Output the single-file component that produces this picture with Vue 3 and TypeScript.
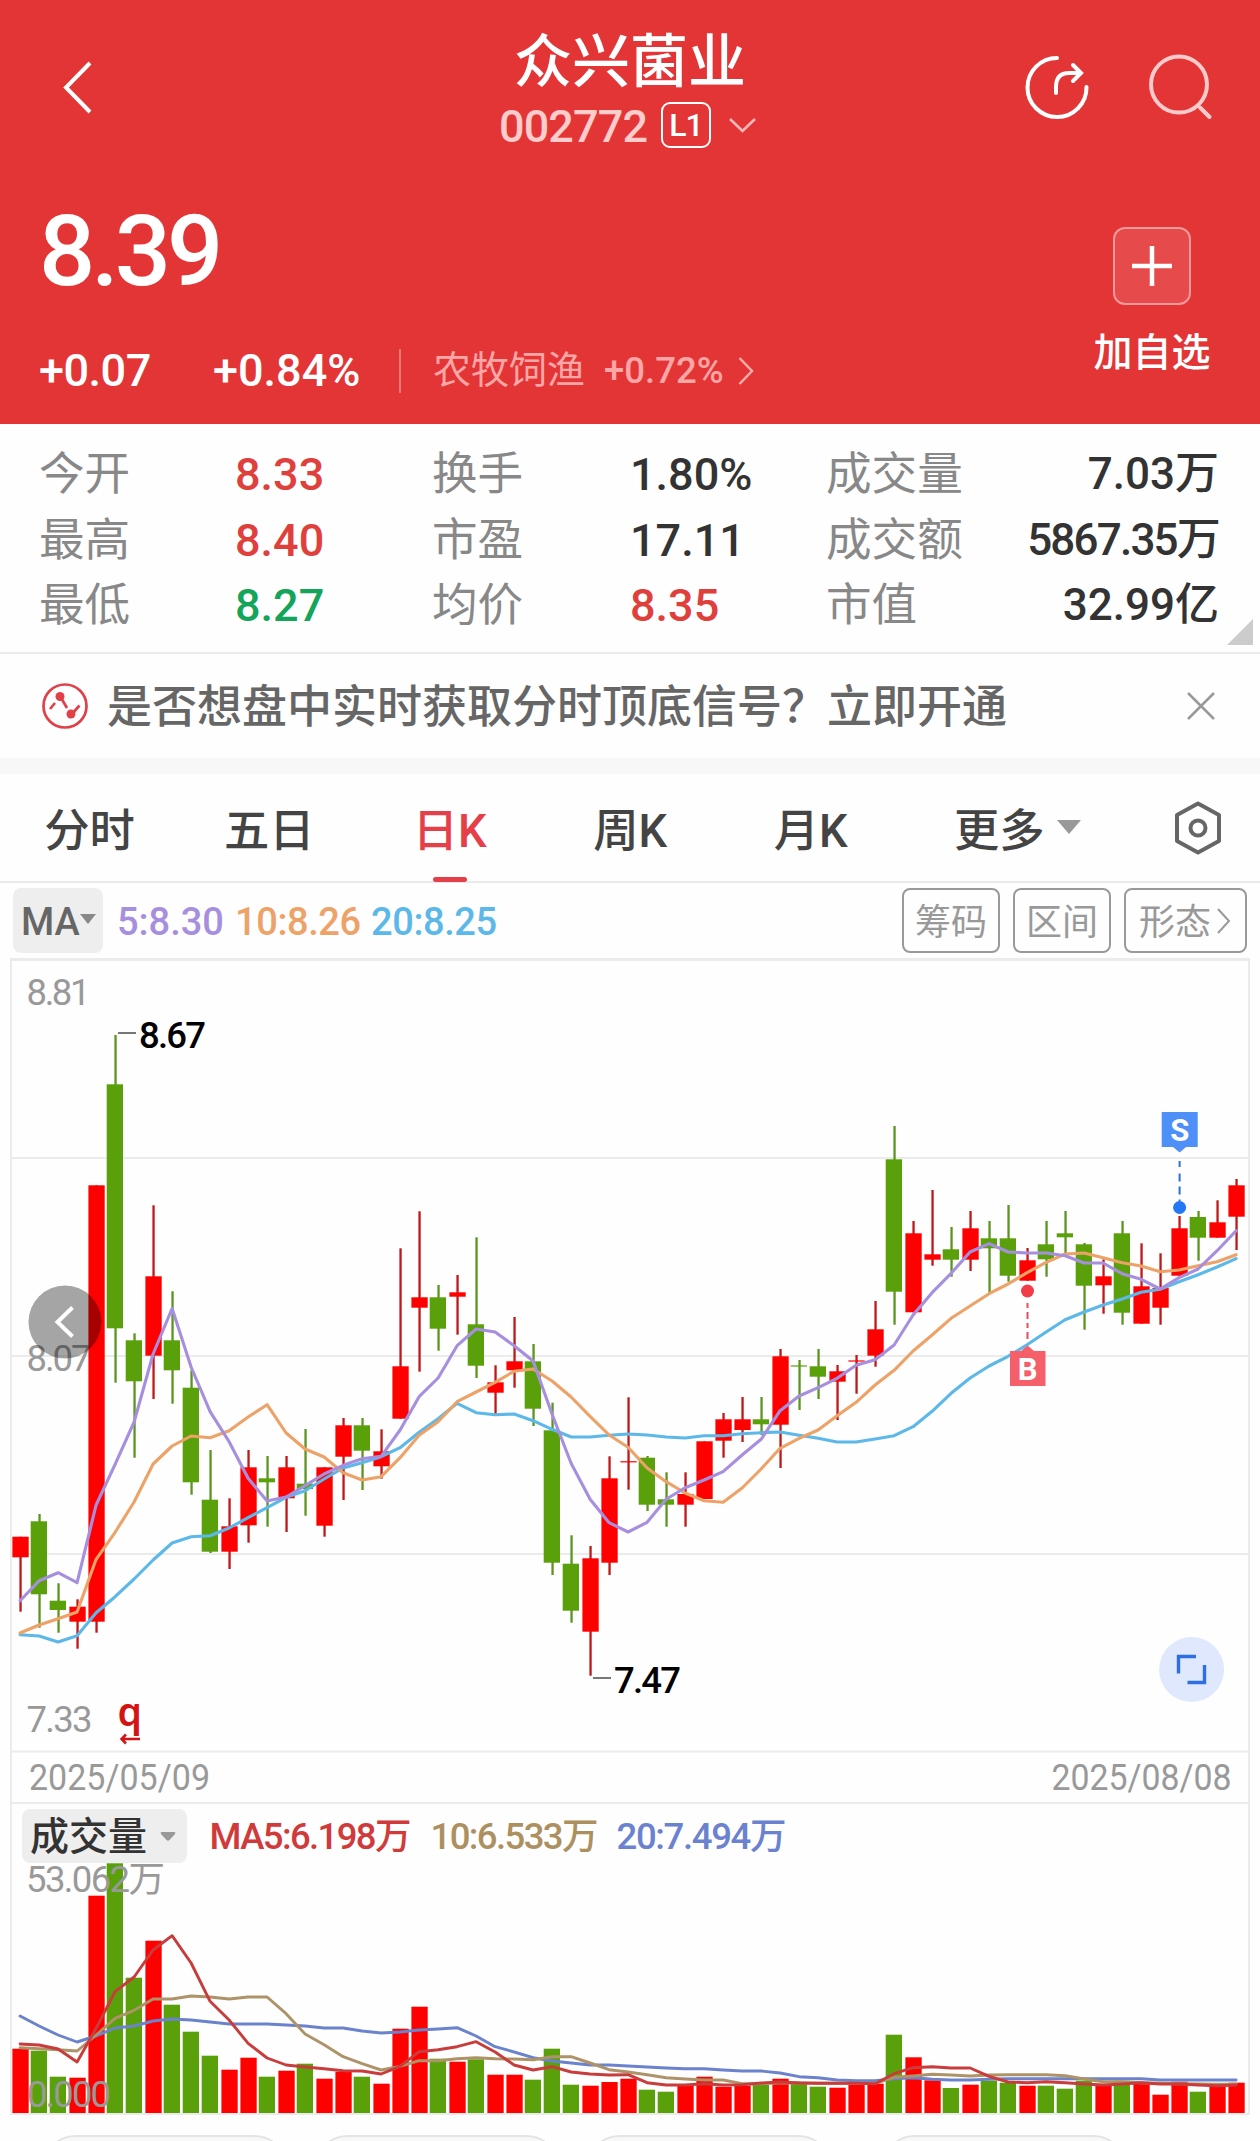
<script setup lang="ts">
type Candle = [up: 0 | 1, high: number, top: number, bottom: number, low: number, volumeTop: number]

interface Quote { label: string; value: string; tone?: string }

const quotes: Quote[][] = [
  [
    { label: '今开', value: '8.33', tone: 'up' },
    { label: '换手', value: '1.80%' },
    { label: '成交量', value: '7.03万' },
  ],
  [
    { label: '最高', value: '8.40', tone: 'up' },
    { label: '市盈', value: '17.11' },
    { label: '成交额', value: '5867.35万', tone: 'tight' },
  ],
  [
    { label: '最低', value: '8.27', tone: 'down' },
    { label: '均价', value: '8.35', tone: 'up' },
    { label: '市值', value: '32.99亿' },
  ],
]

const tabs = ['分时', '五日', '日K', '周K', '月K']

const candles: Candle[] = [
  [1, 1536.7, 1536.7, 1557.3, 1611.7, 2048.7],
  [0, 1514, 1521.3, 1594.3, 1627.7, 2050.7],
  [0, 1583.3, 1600.7, 1610, 1632.7, 2076.7],
  [1, 1599.3, 1606.7, 1621.7, 1648.7, 2077.7],
  [1, 1185.3, 1185.3, 1621.7, 1632.7, 1895.7],
  [0, 1035, 1084.3, 1328.3, 1382.7, 1863.3],
  [0, 1333.3, 1340.3, 1381.3, 1457.7, 1977.7],
  [1, 1205.3, 1276.3, 1355.7, 1399, 1940.7],
  [0, 1291.3, 1340.3, 1370.3, 1403.7, 2004.7],
  [0, 1370, 1387.7, 1482.3, 1494.7, 2031.7],
  [0, 1450, 1499.7, 1551.7, 1553, 2055.7],
  [1, 1498.3, 1526.3, 1551.7, 1569, 2069.7],
  [1, 1450, 1467.3, 1525.3, 1542.7, 2057.7],
  [0, 1456, 1478.3, 1482.3, 1526.7, 2076.7],
  [1, 1456, 1467.3, 1498.3, 1532, 2070.7],
  [0, 1429, 1483.7, 1489, 1515.7, 2063.7],
  [1, 1467.3, 1467.3, 1525.7, 1536.7, 2078.7],
  [1, 1418, 1425.3, 1456.7, 1500, 2071.7],
  [0, 1418, 1425.3, 1450.7, 1490, 2076.7],
  [1, 1429.3, 1451.3, 1466.3, 1478.7, 2083.7],
  [1, 1248.3, 1366.3, 1418.7, 1418.7, 2028.7],
  [1, 1211.3, 1297.3, 1307.7, 1371.7, 2006.7],
  [0, 1285, 1297.3, 1328.7, 1350.7, 2058.7],
  [1, 1275, 1292.3, 1296.7, 1334.7, 2061.7],
  [0, 1237.3, 1324.3, 1365.7, 1378, 2059.3],
  [1, 1365.3, 1382.3, 1392.7, 1414, 2074.7],
  [1, 1317, 1361.3, 1370.3, 1387.7, 2074.7],
  [0, 1344, 1361.3, 1408.7, 1426, 2079.7],
  [0, 1402.7, 1430.3, 1562.7, 1575, 2048.7],
  [0, 1535.3, 1563.7, 1610.7, 1622.7, 2084.7],
  [1, 1546, 1558.3, 1631.7, 1675.7, 2085.7],
  [1, 1456.3, 1478.3, 1562.7, 1575, 2082],
  [1, 1397.3, 1461.2, 1462.4, 1489.7, 2078.7],
  [0, 1456, 1457.7, 1504.7, 1511, 2089.7],
  [0, 1472.3, 1499.3, 1504.7, 1526.7, 2091.7],
  [1, 1472.3, 1494, 1504.7, 1526.7, 2086],
  [1, 1441.3, 1441.3, 1499, 1499, 2076.7],
  [1, 1413, 1419.3, 1440.7, 1457.7, 2086.7],
  [1, 1397, 1419.3, 1430, 1442, 2085.7],
  [0, 1397, 1419.3, 1424.3, 1435, 2085],
  [1, 1349, 1356.3, 1424.7, 1468, 2078.7],
  [0, 1360, 1365.4, 1366.6, 1410, 2083.3],
  [0, 1349, 1366.3, 1376.7, 1399, 2086.7],
  [1, 1365, 1371.3, 1381.7, 1420, 2087.7],
  [1, 1355, 1360.4, 1361.6, 1393.7, 2084.7],
  [1, 1301, 1329.3, 1355.7, 1366.7, 2083.7],
  [0, 1126, 1159.3, 1291.7, 1324.7, 2034.7],
  [1, 1221, 1233.3, 1312.3, 1312.3, 2057.3],
  [1, 1190, 1254.3, 1259.7, 1265.7, 2080.3],
  [0, 1227, 1249.3, 1259.7, 1276.7, 2088],
  [1, 1211, 1228.3, 1259.7, 1271, 2084.7],
  [0, 1221, 1238.3, 1248.3, 1293.3, 2080.7],
  [0, 1205, 1238.3, 1275.7, 1281.7, 2082.7],
  [1, 1248, 1260.3, 1280.7, 1280.7, 2085.7],
  [0, 1221, 1244.3, 1259.3, 1276.7, 2085.7],
  [0, 1211, 1233.3, 1237.3, 1253.3, 2088.7],
  [0, 1243, 1244.3, 1285.7, 1329.7, 2080.7],
  [1, 1259.3, 1276.3, 1285.3, 1313.7, 2084],
  [0, 1221, 1233.3, 1312.7, 1324.7, 2080.7],
  [1, 1243.3, 1286.3, 1323.7, 1323.7, 2083.7],
  [1, 1253.3, 1288, 1307.7, 1324.7, 2094.7],
  [1, 1216, 1228.3, 1275.7, 1275.7, 2081.7],
  [0, 1211, 1217, 1237.7, 1260.7, 2091.7],
  [1, 1200.3, 1222.3, 1237.7, 1237.7, 2086.7],
  [1, 1179, 1185.3, 1216.7, 1250, 2082.7],
]

const ma5 = [1600.7, 1580.7, 1572.7, 1582.7, 1505, 1464.3, 1422, 1354, 1308.5, 1367, 1411.7, 1441.7, 1478.3, 1501, 1497, 1485.7, 1474, 1465.3, 1458.7, 1456.3, 1430, 1396.7, 1378, 1345.7, 1329, 1332, 1345.7, 1361, 1414.3, 1463.3, 1499.3, 1522.7, 1532, 1522.3, 1499.3, 1487.7, 1480, 1471.7, 1455, 1439.3, 1410.7, 1396, 1387.7, 1378.3, 1365.3, 1359.7, 1345, 1315, 1292.7, 1273.3, 1252, 1243.7, 1252, 1253, 1253, 1255.7, 1263, 1263, 1273.7, 1279.3, 1289, 1277.7, 1269, 1250.7, 1230.7]
const ma10 = [1633, 1625, 1618.7, 1612, 1559.3, 1532.3, 1502, 1464, 1446, 1436, 1437.7, 1430.7, 1417, 1404.7, 1433, 1449, 1457, 1472.7, 1480, 1476.7, 1457.7, 1435.3, 1421.7, 1401.7, 1392, 1382.3, 1371.3, 1369, 1381, 1397, 1416.3, 1435, 1447.3, 1468, 1481.7, 1493, 1500.7, 1502.3, 1488, 1469, 1448.3, 1438.3, 1430, 1415.7, 1402.3, 1385, 1370.3, 1351, 1335, 1318.3, 1306, 1293.7, 1284, 1272.7, 1262.3, 1254, 1253, 1257.7, 1262.7, 1266, 1271.7, 1270, 1265.7, 1261.7, 1254.7]
const ma20 = [1634.7, 1636, 1642, 1635.7, 1612.7, 1596.7, 1579, 1560, 1543, 1536.7, 1535.7, 1528, 1517.7, 1507.7, 1497.3, 1490.7, 1479, 1468, 1462.7, 1456.7, 1447.7, 1432.3, 1418.7, 1403.3, 1412.7, 1414.7, 1414, 1420.7, 1429.3, 1437, 1437, 1435.3, 1434, 1435, 1437, 1438, 1435.7, 1435.7, 1433.7, 1432.7, 1432, 1435.3, 1438.3, 1442, 1442, 1439, 1435.7, 1426.7, 1411.3, 1393.3, 1378, 1366, 1356.3, 1344.7, 1332, 1319.7, 1312, 1305, 1299, 1292.3, 1289.3, 1281.7, 1274.7, 1267, 1258.7]

// Volume averages are kept in thirds of a pixel below VOLUME_TOP.
const VOLUME_TOP = 1790
const vol5 = [762, 765, 777, 816, 715, 605, 561, 480, 437, 519, 634, 690, 760, 804, 825, 831, 836, 842, 843, 852, 829, 785, 779, 770, 755, 786, 825, 840, 830, 846, 852, 855, 854, 878, 885, 885, 881, 885, 884, 879, 876, 879, 880, 880, 880, 881, 851, 833, 830, 834, 834, 859, 876, 878, 875, 878, 882, 885, 882, 878, 882, 882, 885, 887, 885]
const vol10 = [773, 776, 779, 783, 735, 685, 661, 627, 627, 618, 621, 627, 621, 621, 671, 732, 764, 800, 821, 840, 829, 812, 812, 806, 803, 806, 807, 809, 800, 800, 819, 839, 846, 854, 863, 867, 870, 870, 881, 881, 879, 878, 880, 880, 880, 880, 862, 858, 853, 855, 858, 855, 854, 854, 854, 857, 867, 875, 875, 878, 880, 881, 882, 883, 883]
const vol20 = [678, 708, 735, 756, 738, 714, 708, 693, 687, 690, 696, 702, 702, 702, 705, 708, 714, 714, 723, 729, 726, 720, 717, 713, 738, 770, 786, 803, 813, 819, 825, 825, 828, 831, 834, 836, 836, 840, 843, 843, 849, 860, 863, 870, 872, 872, 866, 863, 868, 870, 870, 868, 866, 866, 866, 866, 866, 866, 866, 866, 870, 870, 870, 870, 870]

const cx = (i: number): number => 20.4 + i * 19
const bodyX = (c: Candle, i: number): number => cx(i) - (c[0] ? 8 : 8.7)
const tint = (c: Candle): string => (c[0] ? '#ff0000' : '#5aa00a')
const wick = (c: Candle): string => (c[0] ? '#c01818' : '#5c9420')
const line = (ys: number[]): string => ys.map((y, i) => `${(cx(i) - 0.3).toFixed(1)},${y.toFixed(1)}`).join(' ')
const volLine = (ys: number[]): string => line(ys.map((y) => VOLUME_TOP + y / 3))
</script>

<template>
  <main class="page">
    <header class="hero">
      <div class="bar">
        <svg class="back" width="40" height="60" viewBox="0 0 40 60"><path d="M32 6 8 30.500 32 55" fill="none" stroke="#fff" stroke-width="4" /></svg>
        <div class="title">
          <h1>众兴菌业</h1>
          <div class="code">
            <span class="num">002772</span><b>L1</b>
            <svg width="30" height="20" viewBox="0 0 30 20"><path d="M2 4 14.500 16 27 4" fill="none" stroke="#ffb9b9" stroke-width="2.500" /></svg>
          </div>
        </div>
        <div class="tools">
          <svg width="70" height="70" viewBox="0 0 70 70" fill="none" stroke="#fff" stroke-width="4" stroke-linecap="round">
            <path d="M34 5A29.500 29.500 0 1 0 63.500 34" />
            <path d="M33 40V34Q33 20 46 20H57M50 12 58 20 50 28" />
          </svg>
          <svg width="70" height="70" viewBox="0 0 70 70" fill="none" stroke="#ffcaca" stroke-width="4" stroke-linecap="round">
            <circle cx="33" cy="31.500" r="28" /><path d="m54 54.500 9.500 9.500" />
          </svg>
        </div>
      </div>
      <div class="summary">
        <div>
          <div class="price">8.39</div>
          <div class="change">
            <span class="abs">+0.07</span><span class="pct">+0.84%</span>
            <span class="sector"><em>农牧饲渔</em><span>+0.72%</span>
              <svg width="18" height="30" viewBox="0 0 18 30"><path d="M2.500 2 15 15 2.500 28" fill="none" stroke="#ffacac" stroke-width="2.500" /></svg>
            </span>
          </div>
        </div>
        <div class="add">
          <i><svg width="44" height="44" viewBox="0 0 44 44"><path d="M22 2V42M2 22H42" stroke="#fff" stroke-width="4.500" /></svg></i>
          <span>加自选</span>
        </div>
      </div>
    </header>

    <section class="quotes">
      <div v-for="(row, r) in quotes" :key="r" class="qrow">
        <template v-for="q in row" :key="q.label">
          <span class="ql">{{ q.label }}</span><span class="qv" :class="q.tone">{{ q.value }}</span>
        </template>
      </div>
      <i class="corner"></i>
    </section>

    <section class="notice">
      <svg width="48" height="48" viewBox="0 0 48 48" fill="none" stroke="#e04048">
        <circle cx="24" cy="24" r="21.500" stroke-width="2.700" />
        <path d="M9 27 14 21M19 14 26 26M31 32 38.500 23.500" stroke-width="2.700" />
        <circle cx="19" cy="14.500" r="4.500" fill="#e04048" stroke="none" /><circle cx="30" cy="32" r="4.500" fill="#e04048" stroke="none" />
      </svg>
      <p>是否想盘中实时获取分时顶底信号？立即开通</p>
      <svg width="32" height="32" viewBox="0 0 32 32"><path d="M3 3 29 29M29 3 3 29" stroke="#999" stroke-width="2.500" /></svg>
    </section>

    <nav class="tabs">
      <span v-for="(t, i) in tabs" :key="t" class="tab" :class="{ active: i === 2 }">{{ t }}</span>
      <span class="tab more">更多<i class="caret"></i></span>
      <svg width="50" height="56" viewBox="0 0 50 56" fill="none" stroke="#666" stroke-width="4" stroke-linejoin="round">
        <path d="M25 3.500 46 15V41L25 52.500 4 41V15Z" /><circle cx="25" cy="28" r="7.500" />
      </svg>
    </nav>

    <section class="legend">
      <span class="ma">MA<i class="caret small"></i></span>
      <span class="v5">5:8.30</span><span class="v10">10:8.26</span><span class="v20">20:8.25</span>
      <button><span>筹码</span></button><button><span>区间</span></button>
      <button class="wide"><span>形态</span><svg width="16" height="28" viewBox="0 0 16 28"><path d="M2 2 13 14 2 26" fill="none" stroke="#999" stroke-width="2" /></svg></button>
    </section>

    <svg class="chart" width="1260" height="1161" viewBox="0 956 1260 1161">
      <rect x="11" y="959.5" width="1238" height="1154" fill="#fefefe" stroke="none" />
      <g stroke="#ebebeb" stroke-width="2">
        <path d="M10 959.500H1250" stroke-width="3" />
        <path d="M11 958V2115M1249 958V2115M11 1158H1249M11 1356H1249M11 1554H1249M11 1751.500H1249M11 1803H1249M10 2114H1250" />
      </g>
      <g class="axis">
        <text x="26.5" y="1005" textLength="64">8.81</text>
        <text x="26.5" y="1371" textLength="65">8.07</text>
        <text x="26.5" y="1732" textLength="66">7.33</text>
        <text x="29" y="1790" textLength="181" lengthAdjust="spacingAndGlyphs">2025/05/09</text>
        <text x="1051.500" y="1790" textLength="180" lengthAdjust="spacingAndGlyphs">2025/08/08</text>
      </g>

      <g v-for="(c, i) in candles" :key="i">
        <rect :x="cx(i) - 1" :y="c[1]" width="2.300" :height="c[4] - c[1]" :fill="wick(c)" />
        <rect :x="bodyX(c, i)" :y="c[2]" width="16.300" :height="c[3] - c[2]" :fill="tint(c)" />
        <rect :x="bodyX(c, i)" :y="c[5]" width="16.300" :height="2113 - c[5]" :fill="tint(c)" />
      </g>

      <g fill="none" stroke-width="3.100" stroke-linejoin="round" stroke-linecap="round">
        <polyline :points="line(ma20)" stroke="#5cb8e8" />
        <polyline :points="line(ma10)" stroke="#eda268" />
        <polyline :points="line(ma5)" stroke="#a78fdf" />
        <polyline :points="volLine(vol20)" stroke="#6b82cc" stroke-width="2.900" />
        <polyline :points="volLine(vol10)" stroke="#ad9367" stroke-width="2.900" />
        <polyline :points="volLine(vol5)" stroke="#c93c3c" stroke-width="2.900" />
      </g>

      <path d="M118 1033H136M593 1678H611" stroke="#777" stroke-width="2" />
      <g class="peak">
        <text x="139" y="1048" textLength="67">8.67</text>
        <text x="614" y="1693" textLength="67">7.47</text>
      </g>

      <text class="right-mark" x="117.500" y="1726">q</text>
      <path d="M140 1739H121.500M126 1734.500 121.500 1739 126 1743.500" fill="none" stroke="#d41414" stroke-width="2.500" />

      <path d="M1161.700 1112H1197.700V1147H1186L1179.700 1152.500 1173 1147H1161.700Z" fill="#4f8ff8" />
      <path d="M1179.600 1161V1201" stroke="#2a6fd8" stroke-width="2" stroke-dasharray="6 6.500 8 5 8 5" />
      <circle cx="1179.600" cy="1207.500" r="6.500" fill="#2477f5" />
      <text class="flag" x="1179.700" y="1141">S</text>

      <circle cx="1027.500" cy="1291" r="6.500" fill="#f23c48" />
      <path d="M1027.500 1303V1340" stroke="#e0505a" stroke-width="2" stroke-dasharray="5 4 7 4" />
      <path d="M1010 1351H1021L1027.500 1345.500 1034 1351H1045.500V1386H1010Z" fill="#f55f69" />
      <text class="flag" x="1027.700" y="1380">B</text>

      <circle cx="65" cy="1322" r="36.500" fill="#000" fill-opacity=".35" />
      <path d="M72.500 1307.500 57.500 1322 72.500 1336.500" fill="none" stroke="#fff" stroke-width="4" />

      <circle cx="1191.600" cy="1669.500" r="32.500" fill="#dfe8fc" />
      <path d="M1196 1656.500H1178.500V1673.500M1204.500 1665V1682.500H1187.500" fill="none" stroke="#2f6fe4" stroke-width="3.400" />

      <rect x="22" y="1809" width="165" height="54" rx="8" fill="#eee" />
      <text class="vol-name" x="30" y="1850">成交量</text>
      <path d="M161.500 1832H174.500Q176 1832.500 175 1834L169.500 1840Q168 1841.500 166.500 1840L161 1834Q160 1832.500 161.500 1832Z" fill="#999" />
      <g class="vol-legend">
        <text x="209.500" y="1849" textLength="202" fill="#d03a3a">MA5:6.198万</text>
        <text x="430.500" y="1849" textLength="168" fill="#ad9060">10:6.533万</text>
        <text x="616.500" y="1849" textLength="170" fill="#6a82cf">20:7.494万</text>
      </g>
      <g class="axis">
        <text x="26" y="1892" textLength="139">53.062万</text>
        <text x="27" y="2107" textLength="84">0.000</text>
      </g>
    </svg>

    <footer class="pills"><i></i><i></i><i></i><i></i></footer>
  </main>
</template>

<style>
body { background: #fff; }
</style>

<style scoped>
.page { width: 1260px; height: 2141px; overflow: hidden; background: #fefefe; font-family: Roboto, 'Noto Sans CJK SC', sans-serif; color: #333; }
.page * { box-sizing: border-box; }
i, em { font-style: normal; }
svg { display: block; flex: none; }

.hero { height: 424px; background: #e33536; color: #fff; }
.bar { display: grid; grid-template-columns: 400px 460px 400px; height: 160px; }
.back { margin: 57px 0 0 58px; }
.title { display: flex; flex-direction: column; align-items: center; padding-top: 26px; }
h1 { margin: 0; height: 74px; line-height: 72px; font-size: 58px; font-weight: 500; }
.code { display: flex; align-items: center; width: 262px; height: 50px; color: #ffcccc; font-size: 45px; line-height: 50px; }
.code .num { width: 162px; padding-top: 3px; font-weight: 500; letter-spacing: -.9px; }
.code b { width: 50px; height: 46px; border: 2.5px solid #fff; border-radius: 9px; color: #fff; font-size: 32px; font-weight: 500; line-height: 42px; text-align: center; letter-spacing: -1px; }
.code svg { margin-left: 17px; }
.tools { display: flex; gap: 53px; padding: 53px 0 0 163px; }

.summary { display: flex; justify-content: space-between; padding: 0 48px 0 39px; }
.price { margin-top: 41px; height: 100px; line-height: 100px; font-size: 99px; font-weight: 500; letter-spacing: -4px; }
.change { display: flex; align-items: center; height: 50px; margin-top: 45px; font-size: 45px; font-weight: 500; line-height: 50px; }
.abs { width: 174px; letter-spacing: -.5px; }
.pct { width: 186px; }
.sector { display: flex; align-items: center; height: 44px; padding-left: 32px; border-left: 2px solid #ec7576; color: #ffa6a7; font-size: 36.500px; }
.sector em { width: 171px; font-size: 38px; font-weight: 400; transform: translateY(-1px); }
.sector svg { margin-left: 13px; }
.add { display: flex; flex-direction: column; align-items: center; width: 120px; padding-top: 67px; font-size: 39px; font-weight: 500; }
.add i { display: flex; align-items: center; justify-content: center; width: 78px; height: 78px; border: 2px solid #f29a9b; border-radius: 12px; background: #e64a4b; }
.add span { margin-top: 20px; line-height: 56px; }

.quotes { position: relative; height: 230px; padding-top: 18px; border-bottom: 2px solid #eaeaea; }
.qrow { display: grid; grid-template-columns: 196px 197px 198px 196px 200px 193px; height: 65.500px; padding-left: 39px; line-height: 65.500px; font-size: 45.600px; }
.ql { color: #888; }
.qv { font-size: 45px; font-weight: 500; white-space: nowrap; }
.qv:last-child { text-align: right; font-size: 44px; }
.qv.up { color: #e0403c; }
.qv.down { color: #14a45a; }
.qv.tight { letter-spacing: -1.8px; }
.corner { position: absolute; right: 7px; bottom: 7px; border-left: 26px solid transparent; border-bottom: 26px solid #ccc; }

.notice { display: flex; align-items: center; height: 104px; padding: 0 43px 0 41px; }
.notice p { flex: 1; margin: 4px 0 0 18px; color: #666; font-size: 45px; font-weight: 500; line-height: 60px; }

.tabs { display: flex; align-items: center; height: 125px; padding-right: 37px; border-top: 16px solid #f7f7f7; border-bottom: 2px solid #eaeaea; color: #444; font-size: 45.300px; font-weight: 500; }
.tab { display: flex; flex-direction: column; align-items: center; justify-content: center; width: 180.500px; height: 107px; padding-bottom: 2px; white-space: nowrap; }
.tab:first-child { width: 179px; }
.tab.active { position: relative; color: #e5404a; }
.tab.active::after { content: ''; position: absolute; left: 73px; bottom: -1px; width: 34px; height: 5px; border-radius: 3px; background: #e5404a; }
.more { flex-direction: row; width: 130px; margin-left: 53px; justify-content: flex-start; }
.tabs svg { margin-left: auto; }
.caret { width: 0; margin-left: 12px; border: 12px solid transparent; border-top: 14px solid #999; border-bottom: 0; }

.legend { display: flex; align-items: center; height: 75px; margin-bottom: -2px; padding: 0 13px; font-size: 38px; font-weight: 500; }
.ma { display: flex; align-items: center; width: 90px; height: 65px; margin-right: 14px; padding: 2px 0 0 8px; border-radius: 8px; background: #eee; color: #666; }
.caret.small { margin: -6px 0 0; border-width: 10px 8px 0; border-top-color: #888; }
.v5, .v10, .v20 { padding-top: 2px; }
.v5 { width: 118px; color: #a78fdf; }
.v10 { width: 136px; color: #eda268; letter-spacing: -.4px; }
.v20 { flex: 1; color: #5cb8e8; letter-spacing: -.4px; }
.legend button { display: flex; align-items: center; justify-content: center; width: 98px; height: 65px; margin-left: 13px; padding: 0; border: 2px solid #999; border-radius: 8px; background: transparent; color: #999; font: inherit; font-size: 36px; font-weight: 400; }
.legend button span { margin-top: -3px; }
.legend button.wide { width: 123px; }
.wide svg { margin-left: 5px; }

.axis text { font-size: 36.5px; fill: #999; }
.peak text { font-size: 36.5px; font-weight: 500; fill: #000; }
.right-mark { font: 600 39px 'Noto Sans', sans-serif; fill: #d41414; }
.flag { font-size: 31px; font-weight: 700; fill: #fff; text-anchor: middle; }
.vol-name { font-size: 39px; font-weight: 500; fill: #333; }
.vol-legend text { font-size: 36.500px; font-weight: 500; }

.pills { display: flex; margin-top: 18px; padding-left: 41px; }
.pills i { width: 248px; height: 70px; margin-right: 24px; border: 2px solid #e4e4e4; border-radius: 35px; background: #f8f8f8; flex: none; }
.pills i:nth-child(3) { margin-right: 47px; }
</style>
